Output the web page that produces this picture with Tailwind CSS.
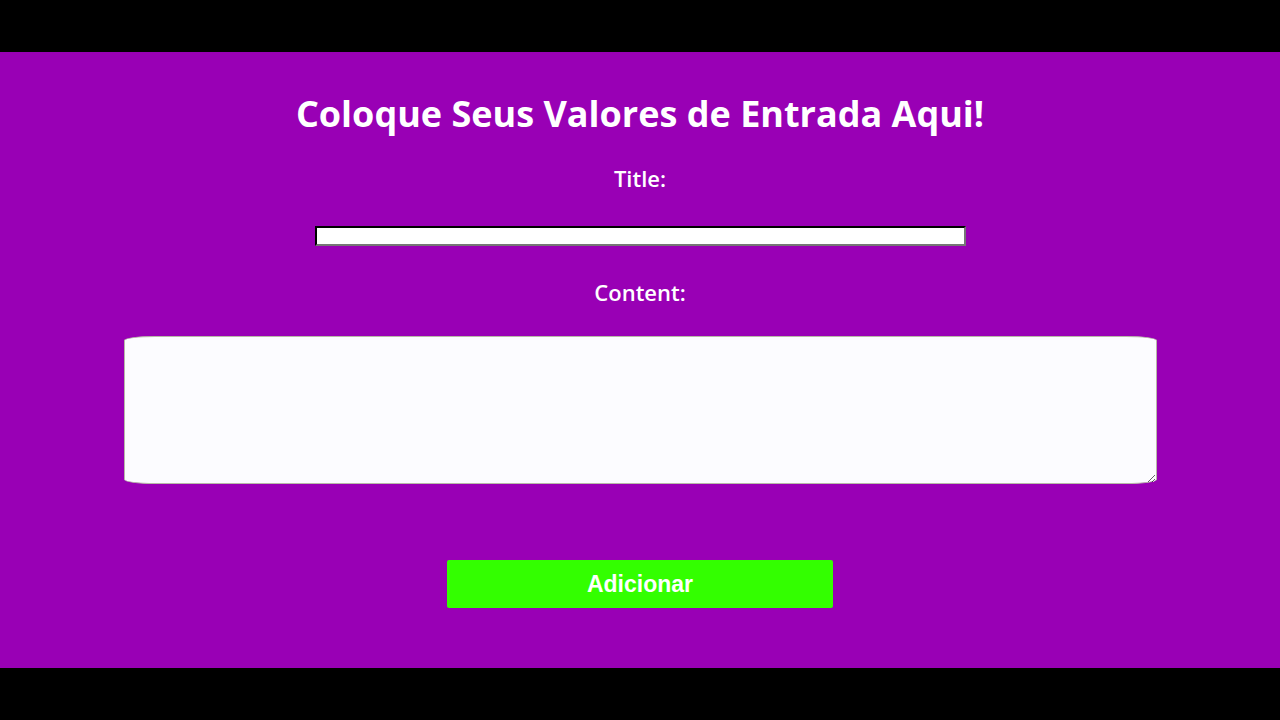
<!DOCTYPE html>
<html lang="pt-BR">
<head>
<meta charset="UTF-8">
<meta name="viewport" content="width=device-width, initial-scale=1">
<title>Valores de Entrada</title>
<script src="https://cdn.jsdelivr.net/npm/@tailwindcss/browser@4"></script>
</head>
<body class="min-h-screen flex flex-col bg-black py-[52px] text-white font-['Open_Sans','Noto_Sans',sans-serif]">
<main class="grow bg-[#9900b5]">
  <form class="flex flex-col items-center pt-8">
    <h1 class="text-4xl leading-[60px] font-bold">Coloque Seus Valores de Entrada Aqui!</h1>
    <label for="title" class="mt-5 text-[22px] leading-[28px] font-semibold">Title:</label>
    <input id="title" type="text" class="mt-[34px] h-5 w-[651px] max-w-full border-2 border-t-black border-l-black border-r-[#767676] border-b-[#767676] bg-white px-1 text-sm text-black">
    <label for="content" class="mt-8 text-[22px] leading-[28px] font-semibold">Content:</label>
    <textarea id="content" class="mt-[30px] h-[148px] w-[1033px] max-w-full resize rounded-[3%] border border-[#b8b8a8] bg-[#fcfcff] p-2 text-black"></textarea>
    <button type="button" class="mt-[76px] h-12 w-[386px] max-w-full rounded-xs bg-[#33ff00] font-['Liberation_Sans',sans-serif] text-[23px] font-bold">Adicionar</button>
  </form>
</main>
</body>
</html>
